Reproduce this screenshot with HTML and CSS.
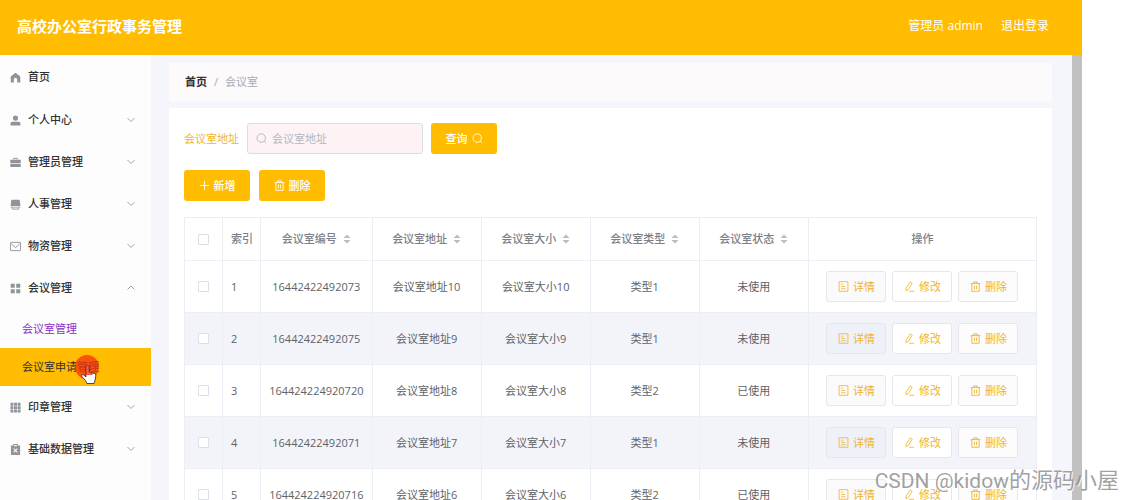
FILE: index.html
```html
<!DOCTYPE html>
<html lang="zh-CN">
<head>
<meta charset="utf-8">
<title>高校办公室行政事务管理</title>
<link rel="stylesheet" href="styles.css">
</head>
<body>
<svg class="sprite" aria-hidden="true">
  <symbol id="home" viewBox="0 0 12 12"><path fill="currentColor" d="M6 .8 11.2 5v6.4H7.8V8.2a1.8 1.8 0 0 0-3.6 0v3.2H.8V5z"/></symbol>
  <symbol id="user" viewBox="0 0 12 12"><circle cx="6" cy="3.4" r="2.8" fill="currentColor"/><path fill="currentColor" d="M.6 11.5V9.4a2 2 0 0 1 2-2h6.8a2 2 0 0 1 2 2v2.1z"/></symbol>
  <symbol id="case" viewBox="0 0 12 12"><path fill="none" stroke="currentColor" d="M4 3V1.5h4V3"/><path fill="currentColor" d="M.3 3h11.4v3.7H.3zM.3 7.5h11.4V11H.3z"/></symbol>
  <symbol id="screen" viewBox="0 0 12 12"><path fill="currentColor" d="M2.3.8h7.4a1 1 0 0 1 1 1L11.400 8H.6l.7-6.200a1 1 0 0 1 1-1zM.6 8.600h10.800v.6H.6z"/><path fill="none" stroke="currentColor" d="M2.500 9v2h7V9"/></symbol>
  <symbol id="mail" viewBox="0 0 12 12"><rect x=".5" y="1.500" width="11" height="9" rx=".6" fill="none" stroke="currentColor"/><path fill="none" stroke="currentColor" d="m1.500 3.200 4.500 4 4.500-4"/></symbol>
  <symbol id="menu" viewBox="0 0 12 12"><path fill="currentColor" d="M.8.8h4.400v4.400H.8zM6.800.8h4.400v4.400H6.800zM.8 6.800h4.400v4.400H.8zM6.800 6.800h4.400v4.400H6.800z"/></symbol>
  <symbol id="grid" viewBox="0 0 12 12"><path fill="currentColor" d="M.5.8h3.200V4H.5zM4.400.8h3.200V4H4.400zM8.300.8h3.200V4H8.300zM.5 4.600h3.200v3.100H.5zM4.400 4.600h3.200v3.100H4.400zM8.300 4.600h3.200v3.100H8.300zM.5 8.300h3.200v3.100H.5zM4.400 8.300h3.200v3.100H4.400zM8.300 8.300h3.200v3.100H8.300z"/></symbol>
  <symbol id="clip" viewBox="0 0 12 12"><path fill="currentColor" fill-rule="evenodd" d="M1 1.500h2.500V0h5v1.500H11V12H1zM4.500 1v1.500h3V1zM3.600 5.200 5.200 7 3.600 8.800l.8.8L6 8l1.600 1.600.8-.8L6.800 7l1.600-1.800-.8-.7L6 6.200 4.400 4.500z"/></symbol>
  <symbol id="down" viewBox="0 0 10 10"><path fill="none" stroke="currentColor" d="m1.500 3 3.500 3.500L8.500 3"/></symbol>
  <symbol id="up" viewBox="0 0 10 10"><path fill="none" stroke="currentColor" d="m1.500 6.500 3.500-3.500 3.500 3.500"/></symbol>
  <symbol id="search" viewBox="0 0 12 12"><circle cx="5.700" cy="5.500" r="4.600" fill="none" stroke="currentColor"/><path fill="none" stroke="currentColor" d="m9 9 2 2"/></symbol>
  <symbol id="plus" viewBox="0 0 12 12"><path fill="none" stroke="currentColor" d="M6 1v10M1 6h10"/></symbol>
  <symbol id="trash" viewBox="0 0 12 12"><path fill="none" stroke="currentColor" d="M.8 2.800h10.400M4 2.500V1h4v1.500M2 3v8.200h8V3M4.800 5v4M7.200 5v4"/></symbol>
  <symbol id="doc" viewBox="0 0 12 12"><path fill="none" stroke="currentColor" stroke-width=".9" d="M1.200.8h9.600v10.400H1.200zM3.500 3.500h2M3.500 6h4M3.500 8.500h5"/></symbol>
  <symbol id="edit" viewBox="0 0 12 12"><path fill="none" stroke="currentColor" stroke-width=".9" d="M6.800 1 9 2.300 4.700 9.300l-2.600 1.300.2-2.800zM5.500 11.200H11"/></symbol>
  <symbol id="sort" viewBox="0 0 8 10"><path fill="currentColor" d="M4 .5 7.500 4h-7zM4 9.500.5 6h7z"/></symbol>
</svg>

<header class="topbar">
  <h1 class="brand">高校办公室行政事务管理</h1>
  <div class="account"><span>管理员 admin</span><a class="logout" href="#">退出登录</a></div>
</header>

<div class="shell">
  <nav class="sidebar">
    <a class="item home" href="#"><svg class="icon"><use href="#home"/></svg><span>首页</span></a>
    <a class="item" href="#"><svg class="icon"><use href="#user"/></svg><span>个人中心</span><svg class="arrow"><use href="#down"/></svg></a>
    <a class="item" href="#"><svg class="icon"><use href="#case"/></svg><span>管理员管理</span><svg class="arrow"><use href="#down"/></svg></a>
    <a class="item" href="#"><svg class="icon"><use href="#screen"/></svg><span>人事管理</span><svg class="arrow"><use href="#down"/></svg></a>
    <a class="item" href="#"><svg class="icon"><use href="#mail"/></svg><span>物资管理</span><svg class="arrow"><use href="#down"/></svg></a>
    <a class="item" href="#"><svg class="icon"><use href="#menu"/></svg><span>会议管理</span><svg class="arrow"><use href="#up"/></svg></a>
    <div class="submenu">
      <a class="subitem current" href="#">会议室管理</a>
      <a class="subitem hovered" href="#">会议室申请管理
        <svg class="pointer" viewBox="0 0 26 32" aria-hidden="true"><circle cx="13" cy="13" r="12" fill="#f5360b" fill-opacity=".78"/><path d="M12 13c0-2 3-2 3 0v5l5 1.300c1.500.4 2 1.200 1.800 2.700l-.8 4.500-1 3h-7l-1.500-3-3.700-4c-.8-1.600 1-2.500 2.200-1.400l2 1.900z" fill="#fff" stroke="#222" stroke-width=".8"/><path d="M12 21v-8c0-2 3-2 3 0v5l3 .8v2.200" fill="#f4604a" stroke="#a52a20" stroke-width=".8"/></svg>
      </a>
    </div>
    <a class="item" href="#"><svg class="icon"><use href="#grid"/></svg><span>印章管理</span><svg class="arrow"><use href="#down"/></svg></a>
    <a class="item" href="#"><svg class="icon"><use href="#clip"/></svg><span>基础数据管理</span><svg class="arrow"><use href="#down"/></svg></a>
  </nav>

  <main class="main">
    <div class="crumbs"><a class="crumb-home" href="#">首页</a><span class="slash">/</span><span>会议室</span></div>
    <section class="card">
      <form class="search">
        <label for="address">会议室地址</label>
        <div class="field"><svg class="glyph"><use href="#search"/></svg><input id="address" type="text" placeholder="会议室地址"></div>
        <button class="btn primary" type="button">查询<svg class="glyph"><use href="#search"/></svg></button>
      </form>
      <div class="tools">
        <button class="btn primary" type="button"><svg class="glyph"><use href="#plus"/></svg>新增</button>
        <button class="btn primary" type="button"><svg class="glyph"><use href="#trash"/></svg>删除</button>
      </div>
      <table class="rooms">
        <colgroup><col class="c-check"><col class="c-index"><col class="c-code"><col class="c-text"><col class="c-text"><col class="c-text"><col class="c-text"><col></colgroup>
        <thead>
          <tr>
            <th><input type="checkbox" aria-label="全选"></th>
            <th class="index">索引</th>
            <th>会议室编号<svg class="sort"><use href="#sort"/></svg></th>
            <th>会议室地址<svg class="sort"><use href="#sort"/></svg></th>
            <th>会议室大小<svg class="sort"><use href="#sort"/></svg></th>
            <th>会议室类型<svg class="sort"><use href="#sort"/></svg></th>
            <th>会议室状态<svg class="sort"><use href="#sort"/></svg></th>
            <th>操作</th>
          </tr>
        </thead>
        <tbody>
          <tr>
            <td><input type="checkbox" aria-label="选择第1行"></td><td class="index">1</td><td>16442422492073</td><td>会议室地址10</td><td>会议室大小10</td><td>类型1</td><td>未使用</td>
            <td><div class="actions"><button class="btn plain detail" type="button"><svg class="glyph"><use href="#doc"/></svg>详情</button><button class="btn plain" type="button"><svg class="glyph"><use href="#edit"/></svg>修改</button><button class="btn plain remove" type="button"><svg class="glyph"><use href="#trash"/></svg>删除</button></div></td>
          </tr>
          <tr>
            <td><input type="checkbox" aria-label="选择第2行"></td><td class="index">2</td><td>16442422492075</td><td>会议室地址9</td><td>会议室大小9</td><td>类型1</td><td>未使用</td>
            <td><div class="actions"><button class="btn plain detail" type="button"><svg class="glyph"><use href="#doc"/></svg>详情</button><button class="btn plain" type="button"><svg class="glyph"><use href="#edit"/></svg>修改</button><button class="btn plain remove" type="button"><svg class="glyph"><use href="#trash"/></svg>删除</button></div></td>
          </tr>
          <tr>
            <td><input type="checkbox" aria-label="选择第3行"></td><td class="index">3</td><td>164424224920720</td><td>会议室地址8</td><td>会议室大小8</td><td>类型2</td><td>已使用</td>
            <td><div class="actions"><button class="btn plain detail" type="button"><svg class="glyph"><use href="#doc"/></svg>详情</button><button class="btn plain" type="button"><svg class="glyph"><use href="#edit"/></svg>修改</button><button class="btn plain remove" type="button"><svg class="glyph"><use href="#trash"/></svg>删除</button></div></td>
          </tr>
          <tr>
            <td><input type="checkbox" aria-label="选择第4行"></td><td class="index">4</td><td>16442422492071</td><td>会议室地址7</td><td>会议室大小7</td><td>类型1</td><td>未使用</td>
            <td><div class="actions"><button class="btn plain detail" type="button"><svg class="glyph"><use href="#doc"/></svg>详情</button><button class="btn plain" type="button"><svg class="glyph"><use href="#edit"/></svg>修改</button><button class="btn plain remove" type="button"><svg class="glyph"><use href="#trash"/></svg>删除</button></div></td>
          </tr>
          <tr>
            <td><input type="checkbox" aria-label="选择第5行"></td><td class="index">5</td><td>164424224920716</td><td>会议室地址6</td><td>会议室大小6</td><td>类型2</td><td>已使用</td>
            <td><div class="actions"><button class="btn plain detail" type="button"><svg class="glyph"><use href="#doc"/></svg>详情</button><button class="btn plain" type="button"><svg class="glyph"><use href="#edit"/></svg>修改</button><button class="btn plain remove" type="button"><svg class="glyph"><use href="#trash"/></svg>删除</button></div></td>
          </tr>
        </tbody>
      </table>
    </section>
  </main>
  <div class="scrollbar"></div>
</div>
<div class="watermark">CSDN @kidow<span class="watermark-name">的源码小屋</span></div>
</body>
</html>
```
FILE: styles.css
```css
* { box-sizing: border-box; }

body {
  display: flex;
  flex-direction: column;
  height: 100vh;
  margin: 0;
  padding-right: 41px;
  overflow: hidden;
  background: #fff;
  color: #606266;
  font: 11px/16px "Open Sans", "Noto Sans CJK SC", sans-serif;
}

a { color: inherit; text-decoration: none; }
.sprite { display: none; }

.topbar {
  display: flex;
  flex: none;
  align-items: center;
  justify-content: space-between;
  height: 55px;
  padding: 0 33px 4px 17px;
  background: #ffbc00;
  color: #fff;
}
.brand { margin: 0; font-size: 15px; line-height: 20px; font-weight: 700; }
.account { display: flex; gap: 18px; font-size: 12px; }

.shell { display: flex; flex: 1; min-height: 0; }

.sidebar { flex: none; width: 151px; background: #fdfdfd; color: #303133; }
.item {
  display: flex;
  align-items: center;
  gap: 7px;
  height: 42px;
  padding: 0 15px 0 10px;
  font-weight: 500;
}
.item.home { height: 44px; }
.icon { width: 11px; height: 11px; color: #909399; }
.arrow { width: 10px; height: 10px; margin-left: auto; color: #a0a3a9; }
.submenu { padding-top: 1px; }
.subitem {
  position: relative;
  display: flex;
  align-items: center;
  height: 38px;
  padding-left: 22px;
}
.current { color: #8a2fc9; }
.hovered { background: #ffbc00; }
.pointer { position: absolute; left: 74px; top: 6px; width: 26px; height: 32px; }

.main { flex: 1; min-width: 0; padding: 8px 20px 0 18px; background: #f5f6fb; }
.crumbs {
  display: flex;
  align-items: center;
  gap: 7px;
  height: 38px;
  margin-bottom: 7px;
  padding: 0 16px;
  background: #fdfafb;
  color: #a6aab5;
}
.crumb-home { color: #303133; font-weight: 700; }

.card {
  display: flex;
  flex-direction: column;
  gap: 16px;
  padding: 15px;
  background: #fff;
}
.search { display: flex; align-items: center; gap: 8px; }
.search label { color: #eeb52c; }
.field {
  display: flex;
  align-items: center;
  gap: 5px;
  width: 176px;
  height: 31px;
  padding: 0 8px;
  border: 1px solid #dcdde4;
  border-radius: 3px;
  background: #fdf3f5;
  color: #b4b6bf;
}
.field input {
  flex: 1;
  min-width: 0;
  padding: 0;
  border: 0;
  outline: 0;
  background: none;
  font: inherit;
}
.field input::placeholder { color: #b4b6bf; }
.glyph { flex: none; width: 11px; height: 11px; }

.btn {
  display: flex;
  align-items: center;
  justify-content: center;
  gap: 4px;
  height: 31px;
  padding: 0;
  border-radius: 3px;
  font: inherit;
}
.primary { width: 66px; border: 0; background: #ffbc00; color: #fff; font-weight: 500; }
.plain { width: 60px; border: 1px solid #e6e7ec; background: #fff; color: #f0b429; }
.detail { background: #fafafc; }
.remove { background: #fdfcfd; }
.tools { display: flex; gap: 9px; }

.rooms {
  width: 100%;
  border-collapse: collapse;
  table-layout: fixed;
  text-align: center;
}
.c-check, .c-index { width: 38px; }
.c-code { width: 13.1%; }
.c-text { width: 12.8%; }
.rooms th, .rooms td { padding: 0; border: 1px solid #ebeef5; white-space: nowrap; }
.rooms th { height: 43px; color: #7d8087; font-weight: 500; }
.rooms td { height: 52px; }
.rooms .index { padding-left: 8px; text-align: left; }
.rooms tbody tr:nth-child(even) { background: #f3f4fa; }
.rooms tbody tr:nth-child(even) .detail { background: #eff1f8; }
.rooms input {
  display: block;
  width: 11px;
  height: 11px;
  margin: 0 auto;
  appearance: none;
  border: 1px solid #dcdfe6;
  border-radius: 1px;
  background: #fff;
}
.sort { width: 8px; height: 10px; margin-left: 6px; vertical-align: -1px; color: #b9bcc4; }
.actions { display: flex; justify-content: center; gap: 6px; }

.scrollbar { flex: none; width: 10px; background: #c1c1c1; }

.watermark {
  position: absolute;
  right: 4px;
  bottom: 4px;
  color: rgba(130, 130, 130, .75);
  font: 21px/30px Roboto, "Noto Sans CJK SC", sans-serif;
  text-shadow: 1px 1px 0 rgba(255, 255, 255, .8);
}
.watermark-name { font-size: 22px; }
```
